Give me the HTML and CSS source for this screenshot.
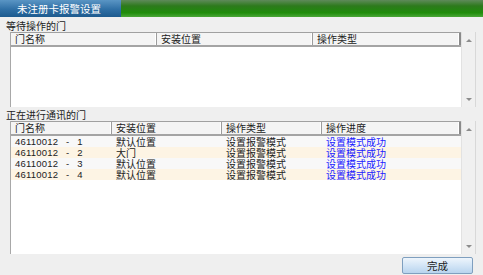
FILE: index.html
```html
<!DOCTYPE html>
<html lang="zh-CN">
<head>
    <meta charset="UTF-8">
    <title>未注册卡报警设置</title>
    <link rel="stylesheet" href="styles.css">
</head>
<body>
    <div class="titlebar">
        <div class="tab">未注册卡报警设置</div>
        <div class="band"></div>
    </div>

    <div class="section-label first">等待操作的门</div>
    <div class="listbox wait">
        <div class="grid">
            <div class="head cols-wait">
                <div class="hcell">门名称</div>
                <div class="hcell">安装位置</div>
                <div class="hcell last">操作类型</div>
            </div>
            <div class="rows"></div>
        </div>
        <div class="scrollbar">
            <span class="arrow up"></span>
            <span class="arrow down"></span>
        </div>
    </div>

    <div class="section-label second">正在进行通讯的门</div>
    <div class="listbox comm">
        <div class="grid">
            <div class="head cols-comm">
                <div class="hcell">门名称</div>
                <div class="hcell">安装位置</div>
                <div class="hcell">操作类型</div>
                <div class="hcell last">操作进度</div>
            </div>
            <div class="rows">
                <div class="row cols-comm">
                    <div class="cell num">46110012 - 1</div>
                    <div class="cell">默认位置</div>
                    <div class="cell">设置报警模式</div>
                    <div class="cell status">设置模式成功</div>
                </div>
                <div class="row alt cols-comm">
                    <div class="cell num">46110012 - 2</div>
                    <div class="cell">大门</div>
                    <div class="cell">设置报警模式</div>
                    <div class="cell status">设置模式成功</div>
                </div>
                <div class="row cols-comm">
                    <div class="cell num">46110012 - 3</div>
                    <div class="cell">默认位置</div>
                    <div class="cell">设置报警模式</div>
                    <div class="cell status">设置模式成功</div>
                </div>
                <div class="row alt cols-comm">
                    <div class="cell num">46110012 - 4</div>
                    <div class="cell">默认位置</div>
                    <div class="cell">设置报警模式</div>
                    <div class="cell status">设置模式成功</div>
                </div>
            </div>
        </div>
        <div class="scrollbar">
            <span class="arrow up"></span>
            <span class="arrow down"></span>
        </div>
    </div>

    <div class="footer">
        <button class="done">完成</button>
    </div>
</body>
</html>
```

FILE: styles.css
```css
body {
    margin: 0;
    width: 483px;
    height: 275px;
    overflow: hidden;
    background-color: #efefef;
    color: #222;
    font-family: "Noto Sans CJK SC", "DejaVu Sans", sans-serif;
    font-size: 10px;
    line-height: 10px;
}

.titlebar {
    display: flex;
    height: 17px;
}

.tab {
    width: 104px;
    padding-left: 17px;
    color: #fff;
    font-size: 10.5px;
    line-height: 17px;
    background: linear-gradient(#5a95c4, #2f6fa5 55%, #1d5a8e);
}

.band {
    flex: 1;
    background: linear-gradient(#5f8a5a, #2d7a1c 35%, #1f8c0a 75%, #4aa637);
}

.section-label {
    height: 10px;
    margin-left: 6px;
}

.section-label.first {
    margin-top: 4px;
}

.section-label.second {
    margin-top: 3px;
}

.listbox {
    display: flex;
    margin: 1px 7px 0 10px;
    border-left: 1px solid #a8a8a8;
}

.listbox.wait {
    height: 75px;
}

.listbox.comm {
    height: 133px;
}

.grid {
    flex: 1;
    display: flex;
    flex-direction: column;
    background-color: #fff;
}

.cols-wait {
    display: grid;
    grid-template-columns: 146px 156px 1fr;
}

.cols-comm {
    display: grid;
    grid-template-columns: 101px 110px 100px 1fr;
}

.head {
    height: 12px;
    border-top: 1px solid #a0a0a0;
    border-bottom: 2px solid #a4a4a4;
    background-color: #f4f4f4;
}

.hcell {
    height: 12px;
    padding-left: 4px;
    line-height: 12px;
    border-right: 1px solid #9c9c9c;
    box-shadow: inset -1px 0 0 #fff;
}

.hcell.last {
    border-right: 2px solid #8a8a8a;
}

.rows {
    flex: 1;
}

.row {
    height: 11px;
    background-color: #f8f8f8;
}

.row.alt {
    background-color: #fdf4e4;
}

.cell {
    height: 11px;
    padding-left: 4px;
    line-height: 11px;
    white-space: nowrap;
}

.cell.num {
    font-family: "Liberation Sans", sans-serif;
    font-size: 9.5px;
    letter-spacing: 0.2px;
    word-spacing: 5px;
}

.cell.status {
    color: #1a1aff;
}

.scrollbar {
    position: relative;
    width: 13px;
    background-color: #f0f0f0;
    border-left: 1px solid #e2e2e2;
    border-right: 1px solid #d8d8d8;
}

.arrow {
    position: absolute;
    left: 4px;
    width: 0;
    height: 0;
    border-left: 3px solid transparent;
    border-right: 3px solid transparent;
}

.arrow.up {
    top: 7px;
    border-bottom: 3px solid #8c8c8c;
}

.arrow.down {
    bottom: 6px;
    border-top: 3px solid #8c8c8c;
}

.footer {
    display: flex;
    justify-content: flex-end;
    padding: 3px 10px 0 0;
}

.done {
    width: 71px;
    height: 17px;
    padding: 0;
    font-family: "Noto Sans CJK SC", sans-serif;
    font-size: 10.5px;
    color: #222;
    border: 1px solid #7f9fbf;
    border-radius: 2px;
    background: linear-gradient(#eef5fc, #d3e5f6 50%, #b8d4ee);
    cursor: pointer;
}
```
